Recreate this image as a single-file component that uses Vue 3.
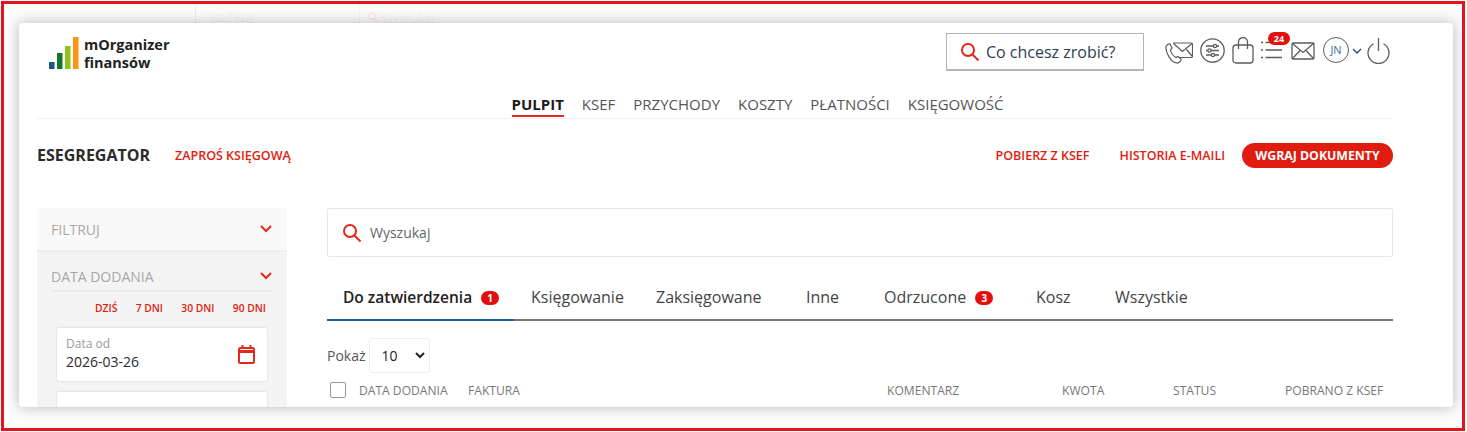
<template>
  <div class="frame">
    <div class="backdrop">
      <span class="back-line"></span>
      <span class="back-filter">FILTRUJ</span>
      <span class="back-line second"></span>
      <svg class="back-icon" width="10" height="10" viewBox="0 0 20 20" fill="none" stroke="#fbe8e6" stroke-width="3">
        <circle cx="8" cy="8" r="6" />
        <path d="M12.5 12.5 18.5 18.5" />
      </svg>
      <span class="back-search">Wyszukaj</span>
    </div>
    <div class="card">
      <header class="top">
        <div class="logo">
          <svg width="31" height="33" viewBox="0 0 31 33">
            <rect x="0" y="25" width="5.5" height="7" fill="#1f5582" />
            <rect x="8" y="16" width="5.5" height="16" fill="#17752b" />
            <rect x="16" y="9" width="5.5" height="23" fill="#8fc31f" />
            <rect x="24" y="0" width="5.5" height="32" fill="#ff9410" />
          </svg>
          <div class="logo-text">mOrganizer<br />finansów</div>
        </div>
        <div class="top-right">
          <div class="quick">
            <svg width="20" height="20" viewBox="0 0 20 20" fill="none" stroke="#e5281c" stroke-width="2">
              <circle cx="8" cy="8" r="6" />
              <path d="M12.5 12.5 18.5 18.5" />
            </svg>
            <span>Co chcesz zrobić?</span>
          </div>
          <div class="icons">
            <svg class="ic-phone" width="28" height="22" viewBox="0 0 28 22" fill="none" stroke="#5c5c5c" stroke-width="1.2">
              <path d="M8 1H26a1.500 1.500 0 0 1 1.500 1.500V14a1.500 1.500 0 0 1-1.500 1.500H14" />
              <path d="M8.500 1.500 17.500 9.500 27 1.500M21.500 7.500 27 14" />
              <path d="M1 5c.5-2 2.500-3.500 4-3l2 4-1.500 2c.5 3 3 6 5.500 7.500l2-1 3 2.500c.5 1.500-2 4.500-4.500 4C6 20.500 .5 10.500 1 5Z" />
            </svg>
            <svg class="ic-sliders" width="25" height="25" viewBox="0 0 25 25" fill="none" stroke="#5c5c5c" stroke-width="1.300">
              <circle cx="12.500" cy="12.500" r="11.700" />
              <path d="M6 8h13M6 12.500h13M6 17h13" />
              <circle cx="15" cy="8" r="1.600" fill="#fff" />
              <circle cx="9.500" cy="12.500" r="1.600" fill="#fff" />
              <circle cx="13" cy="17" r="1.600" fill="#fff" />
            </svg>
            <svg class="ic-bag" width="22" height="27" viewBox="0 0 22 27" fill="none" stroke="#5c5c5c" stroke-width="1.300">
              <rect x="1" y="8" width="20" height="18" rx="3" />
              <path d="M6.500 12V5a4.500 4.500 0 0 1 9 0V12" />
            </svg>
            <div class="list-icon">
              <svg width="21" height="18" viewBox="0 0 21 18" fill="none" stroke="#5c5c5c" stroke-width="1.600">
                <path d="M0 1.500h2M4.500 1.500h16.500M0 9h2M4.500 9h16.500M0 16.500h2M4.500 16.500h16.500" />
              </svg>
              <span class="notif">24</span>
            </div>
            <svg class="ic-mail" width="24" height="18" viewBox="0 0 24 18" fill="none" stroke="#5c5c5c" stroke-width="1.300">
              <rect x="1" y="1" width="22" height="16" rx="1" />
              <path d="M1.500 1.500 12 10.500 22.500 1.500M1.500 16.500 9 8.500M22.500 16.500 15 8.500" />
            </svg>
            <div class="avatar">JN</div>
            <svg class="chev-small" width="10" height="6" viewBox="0 0 10 6" fill="none" stroke="#1f4e79" stroke-width="1.300">
              <path d="M1 1 5 5 9 1" />
            </svg>
            <svg class="ic-power" width="23" height="26" viewBox="0 0 23 26" fill="none" stroke="#5c5c5c" stroke-width="1.300">
              <path d="M6.500 5.800a10.500 10.500 0 1 0 10 0" />
              <path d="M11.500 0V13" />
            </svg>
          </div>
        </div>
      </header>

      <nav class="nav">
        <a v-for="item in navItems" :key="item" :class="{ active: item === 'PULPIT' }">{{ item }}</a>
      </nav>

      <div class="section-row">
        <div class="section-left">
          <h1>ESEGREGATOR</h1>
          <a class="red-link">ZAPROŚ KSIĘGOWĄ</a>
        </div>
        <div class="section-right">
          <a class="red-link">POBIERZ Z KSEF</a>
          <a class="red-link">HISTORIA E-MAILI</a>
          <button class="upload">WGRAJ DOKUMENTY</button>
        </div>
      </div>

      <div class="content">
        <aside class="side">
          <div class="side-head">
            <span>FILTRUJ</span>
            <svg width="12" height="8" viewBox="0 0 12 8" fill="none" stroke="#e5281c" stroke-width="2">
              <path d="M1 1 6 6 11 1" />
            </svg>
          </div>
          <div class="side-body">
            <div class="side-sub">
              <span>DATA DODANIA</span>
              <svg width="12" height="8" viewBox="0 0 12 8" fill="none" stroke="#e5281c" stroke-width="2">
                <path d="M1 1 6 6 11 1" />
              </svg>
            </div>
            <div class="ranges">
              <a v-for="r in ranges" :key="r">{{ r }}</a>
            </div>
            <div class="date-box">
              <div class="date-text">
                <div class="date-label">Data od</div>
                <div class="date-value">2026-03-26</div>
              </div>
              <svg width="17" height="19" viewBox="0 0 17 19" fill="none" stroke="#e5281c" stroke-width="2">
                <rect x="1" y="3" width="15" height="15" rx="1.500" />
                <path d="M1 6.500h15" stroke-width="3" />
                <path d="M4.500 0v3M12.500 0v3" />
              </svg>
            </div>
            <div class="date-box"></div>
          </div>
        </aside>

        <main class="main">
          <div class="search">
            <svg width="20" height="20" viewBox="0 0 20 20" fill="none" stroke="#e5281c" stroke-width="2">
              <circle cx="8" cy="8" r="6" />
              <path d="M12.500 12.500 18.500 18.500" />
            </svg>
            <span>Wyszukaj</span>
          </div>

          <div class="tabs">
            <div v-for="tab in tabs" :key="tab.name" class="tab" :class="{ active: tab.active }">
              {{ tab.name }}
              <span v-if="tab.count" class="count">{{ tab.count }}</span>
            </div>
          </div>

          <div class="show">
            <span>Pokaż</span>
            <div class="select">
              10
              <svg width="10" height="7" viewBox="0 0 10 7" fill="none" stroke="#222" stroke-width="2">
                <path d="M1 1 5 5 9 1" />
              </svg>
            </div>
          </div>

          <div class="thead">
            <span class="check"></span>
            <span class="th-date">DATA DODANIA</span>
            <span class="th-invoice">FAKTURA</span>
            <span class="th-comment">KOMENTARZ</span>
            <span class="th-amount">KWOTA</span>
            <span class="th-status">STATUS</span>
            <span class="th-ksef">POBRANO Z KSEF</span>
          </div>
        </main>
      </div>
    </div>
  </div>
</template>

<script setup>
const navItems = ['PULPIT', 'KSEF', 'PRZYCHODY', 'KOSZTY', 'PŁATNOŚCI', 'KSIĘGOWOŚĆ']
const ranges = ['DZIŚ', '7 DNI', '30 DNI', '90 DNI']
const tabs = [
  { name: 'Do zatwierdzenia', count: 1, active: true },
  { name: 'Księgowanie' },
  { name: 'Zaksięgowane' },
  { name: 'Inne' },
  { name: 'Odrzucone', count: 3 },
  { name: 'Kosz' },
  { name: 'Wszystkie' }
]
</script>

<style>
html,
body {
  margin: 0;
  background: #fff;
}
</style>

<style scoped>
* {
  box-sizing: border-box;
}
.frame {
  position: relative;
  width: 1464px;
  height: 430px;
  margin: 1px 0 0 1px;
  border: 3px solid #e2151b;
  background: #fcfcfc;
  font-family: "Open Sans", "Noto Sans", sans-serif;
  padding: 19px 0 0 15px;
  overflow: hidden;
}
.backdrop {
  position: absolute;
  inset: 0;
  color: #f5f5f5;
  font-size: 12px;
}
.back-line {
  position: absolute;
  left: 191px;
  top: 0;
  height: 20px;
  width: 1px;
  background: #f9e6e6;
}
.back-line.second {
  left: 355px;
  background: #f5f5f5;
}
.back-filter {
  position: absolute;
  left: 207px;
  top: 5px;
}
.back-icon {
  position: absolute;
  left: 364px;
  top: 8px;
}
.back-search {
  position: absolute;
  left: 378px;
  top: 6px;
}
.card {
  position: relative;
  width: 1434px;
  height: 384px;
  background: #fff;
  border-radius: 4px;
  box-shadow: 0 0 14px rgba(0, 0, 0, 0.28);
  padding: 0 60px 0 18px;
  overflow: hidden;
}
.top {
  display: flex;
  justify-content: space-between;
  height: 72px;
}
.logo {
  display: flex;
  gap: 4px;
  padding: 14px 0 0 12px;
}
.logo-text {
  font-size: 14.5px;
  font-weight: 700;
  line-height: 18px;
  color: #222;
  margin-top: -1px;
}
.top-right {
  display: flex;
  padding-top: 10px;
}
.quick {
  width: 198px;
  height: 38px;
  border: 1px solid #b5b5b5;
  border-bottom-width: 2px;
  display: flex;
  align-items: center;
  gap: 6px;
  padding-left: 13px;
  font-size: 16px;
  color: #2c3e50;
}
.icons {
  display: flex;
  align-items: flex-start;
  margin-left: 21px;
  width: 228px;
  height: 40px;
}
.icons > * {
  flex: none;
}
.ic-phone {
  margin-top: 9px;
}
.ic-sliders {
  margin: 5px 0 0 7px;
}
.ic-bag {
  margin: 4px 0 0 7px;
}
.list-icon {
  position: relative;
  width: 21px;
  margin: 8px 0 0 7px;
}
.list-icon svg {
  display: block;
}
.notif {
  position: absolute;
  left: 7px;
  top: -9px;
  width: 22px;
  height: 13px;
  border-radius: 7px;
  background: #e30f0f;
  color: #fff;
  font-size: 9px;
  font-weight: 700;
  line-height: 13px;
  text-align: center;
}
.ic-mail {
  margin: 9px 0 0 9px;
}
.avatar {
  width: 26px;
  height: 26px;
  border: 1.3px solid #5c5c5c;
  border-radius: 50%;
  font-size: 11px;
  line-height: 23px;
  text-align: center;
  color: #4a6f94;
  margin: 4px 0 0 8px;
}
.chev-small {
  margin: 15px 0 0 3px;
}
.ic-power {
  margin: 5px 0 0 5px;
}
.nav {
  display: flex;
  justify-content: center;
  gap: 18px;
  height: 24px;
  border-bottom: 1px solid #f1f1f1;
  padding-left: 85px;
}
.nav a {
  font-size: 15px;
  line-height: 19px;
  color: #555;
  height: 22px;
}
.nav a.active {
  color: #1b1b1b;
  font-weight: 700;
  border-bottom: 2px solid #e5281c;
}
.section-row {
  display: flex;
  justify-content: space-between;
  align-items: center;
  height: 26px;
  margin-top: 23px;
}
.section-left,
.section-right {
  display: flex;
  align-items: center;
}
.section-left h1 {
  font-size: 16px;
  font-weight: 700;
  color: #2b2b2b;
  margin: 0 25px 0 0;
}
.red-link {
  font-size: 12.5px;
  font-weight: 600;
  color: #e01b10;
}
.section-right .red-link {
  margin-right: 30px;
}
.section-right .red-link:nth-child(2) {
  margin-right: 17px;
}
.upload {
  width: 151px;
  height: 25px;
  border: none;
  border-radius: 13px;
  background: #e01b10;
  color: #fff;
  font: 700 12.3px "Open Sans", sans-serif;
  padding: 0;
}
.content {
  display: flex;
  gap: 40px;
  margin-top: 40px;
}
.side {
  width: 250px;
  flex: none;
}
.side-head {
  display: flex;
  justify-content: space-between;
  align-items: center;
  height: 44px;
  padding: 0 15px 0 14px;
  background: #f9f9f9;
  border-bottom: 2px solid #eee;
  font-size: 14px;
  color: #a8a8a8;
}
.side-body {
  background: #f4f4f4;
  padding: 0 14px;
  height: 200px;
}
.side-sub {
  display: flex;
  justify-content: space-between;
  align-items: center;
  height: 40px;
  padding-right: 1px;
  padding-top: 10px;
  border-bottom: 2px solid #ebebeb;
  font-size: 14px;
  color: #a8a8a8;
}
.ranges {
  display: flex;
  justify-content: flex-end;
  gap: 18.3px;
  font-size: 10.3px;
  font-weight: 600;
  color: #e01b10;
  height: 36px;
  padding: 9px 7px 0 0;
  line-height: 14px;
}
.date-box {
  display: flex;
  justify-content: space-between;
  align-items: center;
  width: 210px;
  height: 53px;
  margin: 0 0 11px 6px;
  padding: 0 12px 0 9px;
  background: #fff;
  border-radius: 2px;
  box-shadow: 0 0 2px rgba(0, 0, 0, 0.2);
}
.date-text {
  margin-top: -1px;
}
.date-label {
  font-size: 12px;
  line-height: 16px;
  color: #999;
}
.date-value {
  font-size: 14px;
  line-height: 20px;
  color: #2a2a2a;
}
.main {
  width: 1066px;
  flex: none;
}
.search {
  display: flex;
  align-items: center;
  gap: 8px;
  height: 49px;
  padding-left: 14px;
  border: 1px solid #e8e8e8;
  border-radius: 2px;
  font-size: 14px;
  color: #666;
}
.tabs {
  display: grid;
  grid-template-columns: 187px 126px 150px 78px 152px 79px 1fr;
  height: 43px;
  margin-top: 21px;
  border-bottom: 2px solid #777;
}
.tab {
  font-size: 16px;
  line-height: 39px;
  color: #444;
  white-space: nowrap;
  padding-left: 16px;
  height: 43px;
}
.tab:nth-child(2) {
  padding-left: 17px;
}
.tab.active {
  color: #222;
  font-size: 15.5px;
  font-weight: 600;
  border-bottom: 2px solid #1c5fa0;
}
.count {
  display: inline-block;
  width: 18px;
  height: 14px;
  margin-left: 5px;
  border-radius: 7px;
  background: #e30f0f;
  color: #fff;
  font-size: 10px;
  font-weight: 700;
  line-height: 14px;
  text-align: center;
  vertical-align: 1px;
}
.show {
  display: flex;
  align-items: center;
  gap: 3px;
  margin-top: 17px;
  font-size: 14px;
  color: #555;
}
.select {
  display: flex;
  align-items: center;
  justify-content: space-between;
  width: 61px;
  height: 35px;
  padding: 0 4px 0 12px;
  border: 1px solid #eee;
  border-radius: 3px;
  color: #222;
}
.thead {
  display: flex;
  align-items: center;
  margin-top: 7px;
  font-size: 12.1px;
  color: #777;
  height: 20px;
}
.check {
  width: 16px;
  height: 16px;
  margin-left: 3px;
  border: 1.5px solid #999;
  border-radius: 2px;
  flex: none;
}
.th-date {
  margin-left: 13px;
  width: 109px;
}
.th-invoice {
  width: 419px;
}
.th-comment {
  width: 175px;
}
.th-amount {
  width: 111px;
}
.th-status {
  width: 112px;
}
</style>
